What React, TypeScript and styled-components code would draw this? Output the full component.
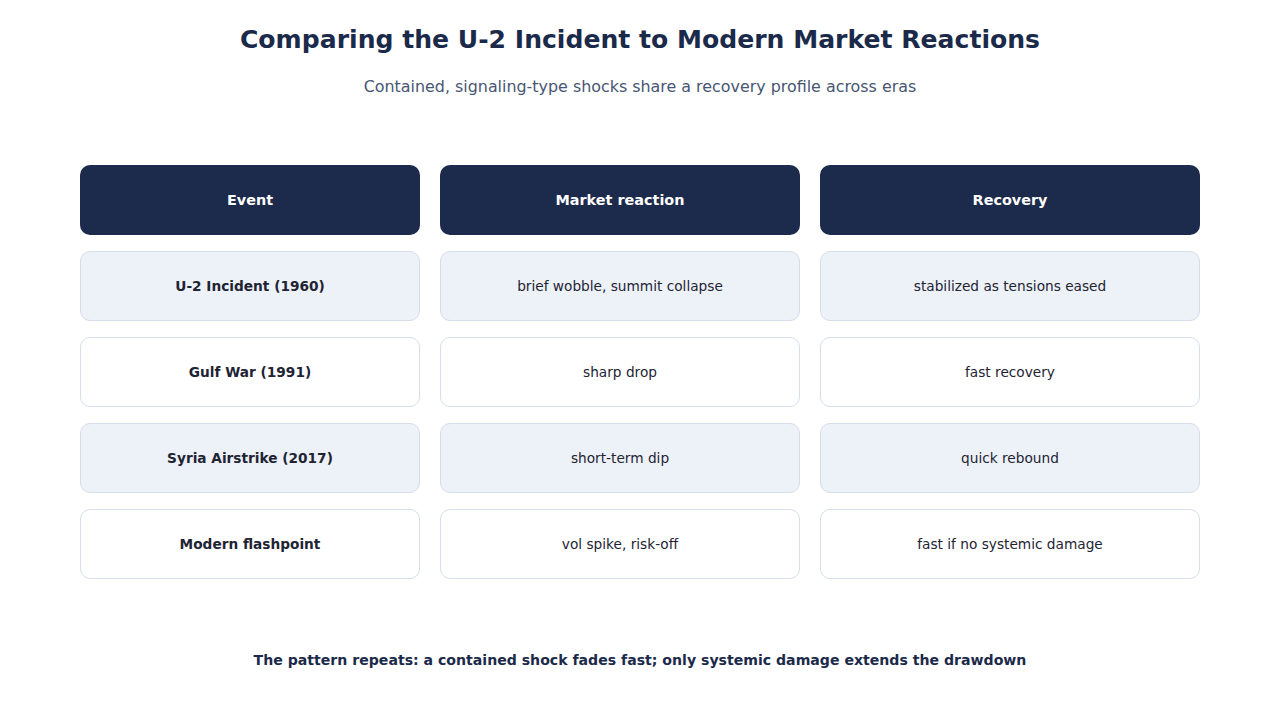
import React from "react";
import styled, { createGlobalStyle } from "styled-components";

const Global = createGlobalStyle`
  html, body { margin: 0; padding: 0; background: #ffffff; }
  body { font-family: "DejaVu Sans", Verdana, sans-serif; }
`;

const Page = styled.div`
  width: 1280px;
  height: 720px;
  box-sizing: border-box;
  padding-top: 25px;
  display: flex;
  flex-direction: column;
  align-items: center;
`;

const Title = styled.h1`
  margin: 0;
  font-size: 25.1px;
  line-height: 30px;
  font-weight: 700;
  color: #1b2a4a;
`;

const Subtitle = styled.p`
  margin: 22px 0 0;
  font-size: 15.9px;
  line-height: 19px;
  color: #475673;
`;

const Grid = styled.div`
  margin-top: 69px;
  display: grid;
  grid-template-columns: 340px 360px 380px;
  grid-auto-rows: 70px;
  column-gap: 20px;
  row-gap: 16px;
`;

const HeaderCell = styled.div`
  background: #1c2a4b;
  border-radius: 10px;
  color: #ffffff;
  font-weight: 700;
  font-size: 14.4px;
  display: flex;
  align-items: center;
  justify-content: center;
`;

const Cell = styled.div<{ $shaded: boolean; $bold?: boolean }>`
  box-sizing: border-box;
  background: ${(p) => (p.$shaded ? "#edf1f8" : "#ffffff")};
  border: 1.5px solid #d7ddea;
  border-radius: 10px;
  color: #1e2433;
  font-size: 13.7px;
  font-weight: ${(p) => (p.$bold ? 700 : 400)};
  display: flex;
  align-items: center;
  justify-content: center;
`;

const Footer = styled.p`
  margin: 73px 0 0;
  font-size: 14.1px;
  line-height: 17px;
  font-weight: 700;
  color: #1b2a4a;
`;

const rows = [
  ["U-2 Incident (1960)", "brief wobble, summit collapse", "stabilized as tensions eased"],
  ["Gulf War (1991)", "sharp drop", "fast recovery"],
  ["Syria Airstrike (2017)", "short-term dip", "quick rebound"],
  ["Modern flashpoint", "vol spike, risk-off", "fast if no systemic damage"],
];

export default function App() {
  return (
    <>
      <Global />
      <Page>
        <Title>Comparing the U-2 Incident to Modern Market Reactions</Title>
        <Subtitle>Contained, signaling-type shocks share a recovery profile across eras</Subtitle>
        <Grid>
          <HeaderCell>Event</HeaderCell>
          <HeaderCell>Market reaction</HeaderCell>
          <HeaderCell>Recovery</HeaderCell>
          {rows.map((r, i) =>
            r.map((t, j) => (
              <Cell key={`${i}-${j}`} $shaded={i % 2 === 0} $bold={j === 0}>
                {t}
              </Cell>
            ))
          )}
        </Grid>
        <Footer>The pattern repeats: a contained shock fades fast; only systemic damage extends the drawdown</Footer>
      </Page>
    </>
  );
}
